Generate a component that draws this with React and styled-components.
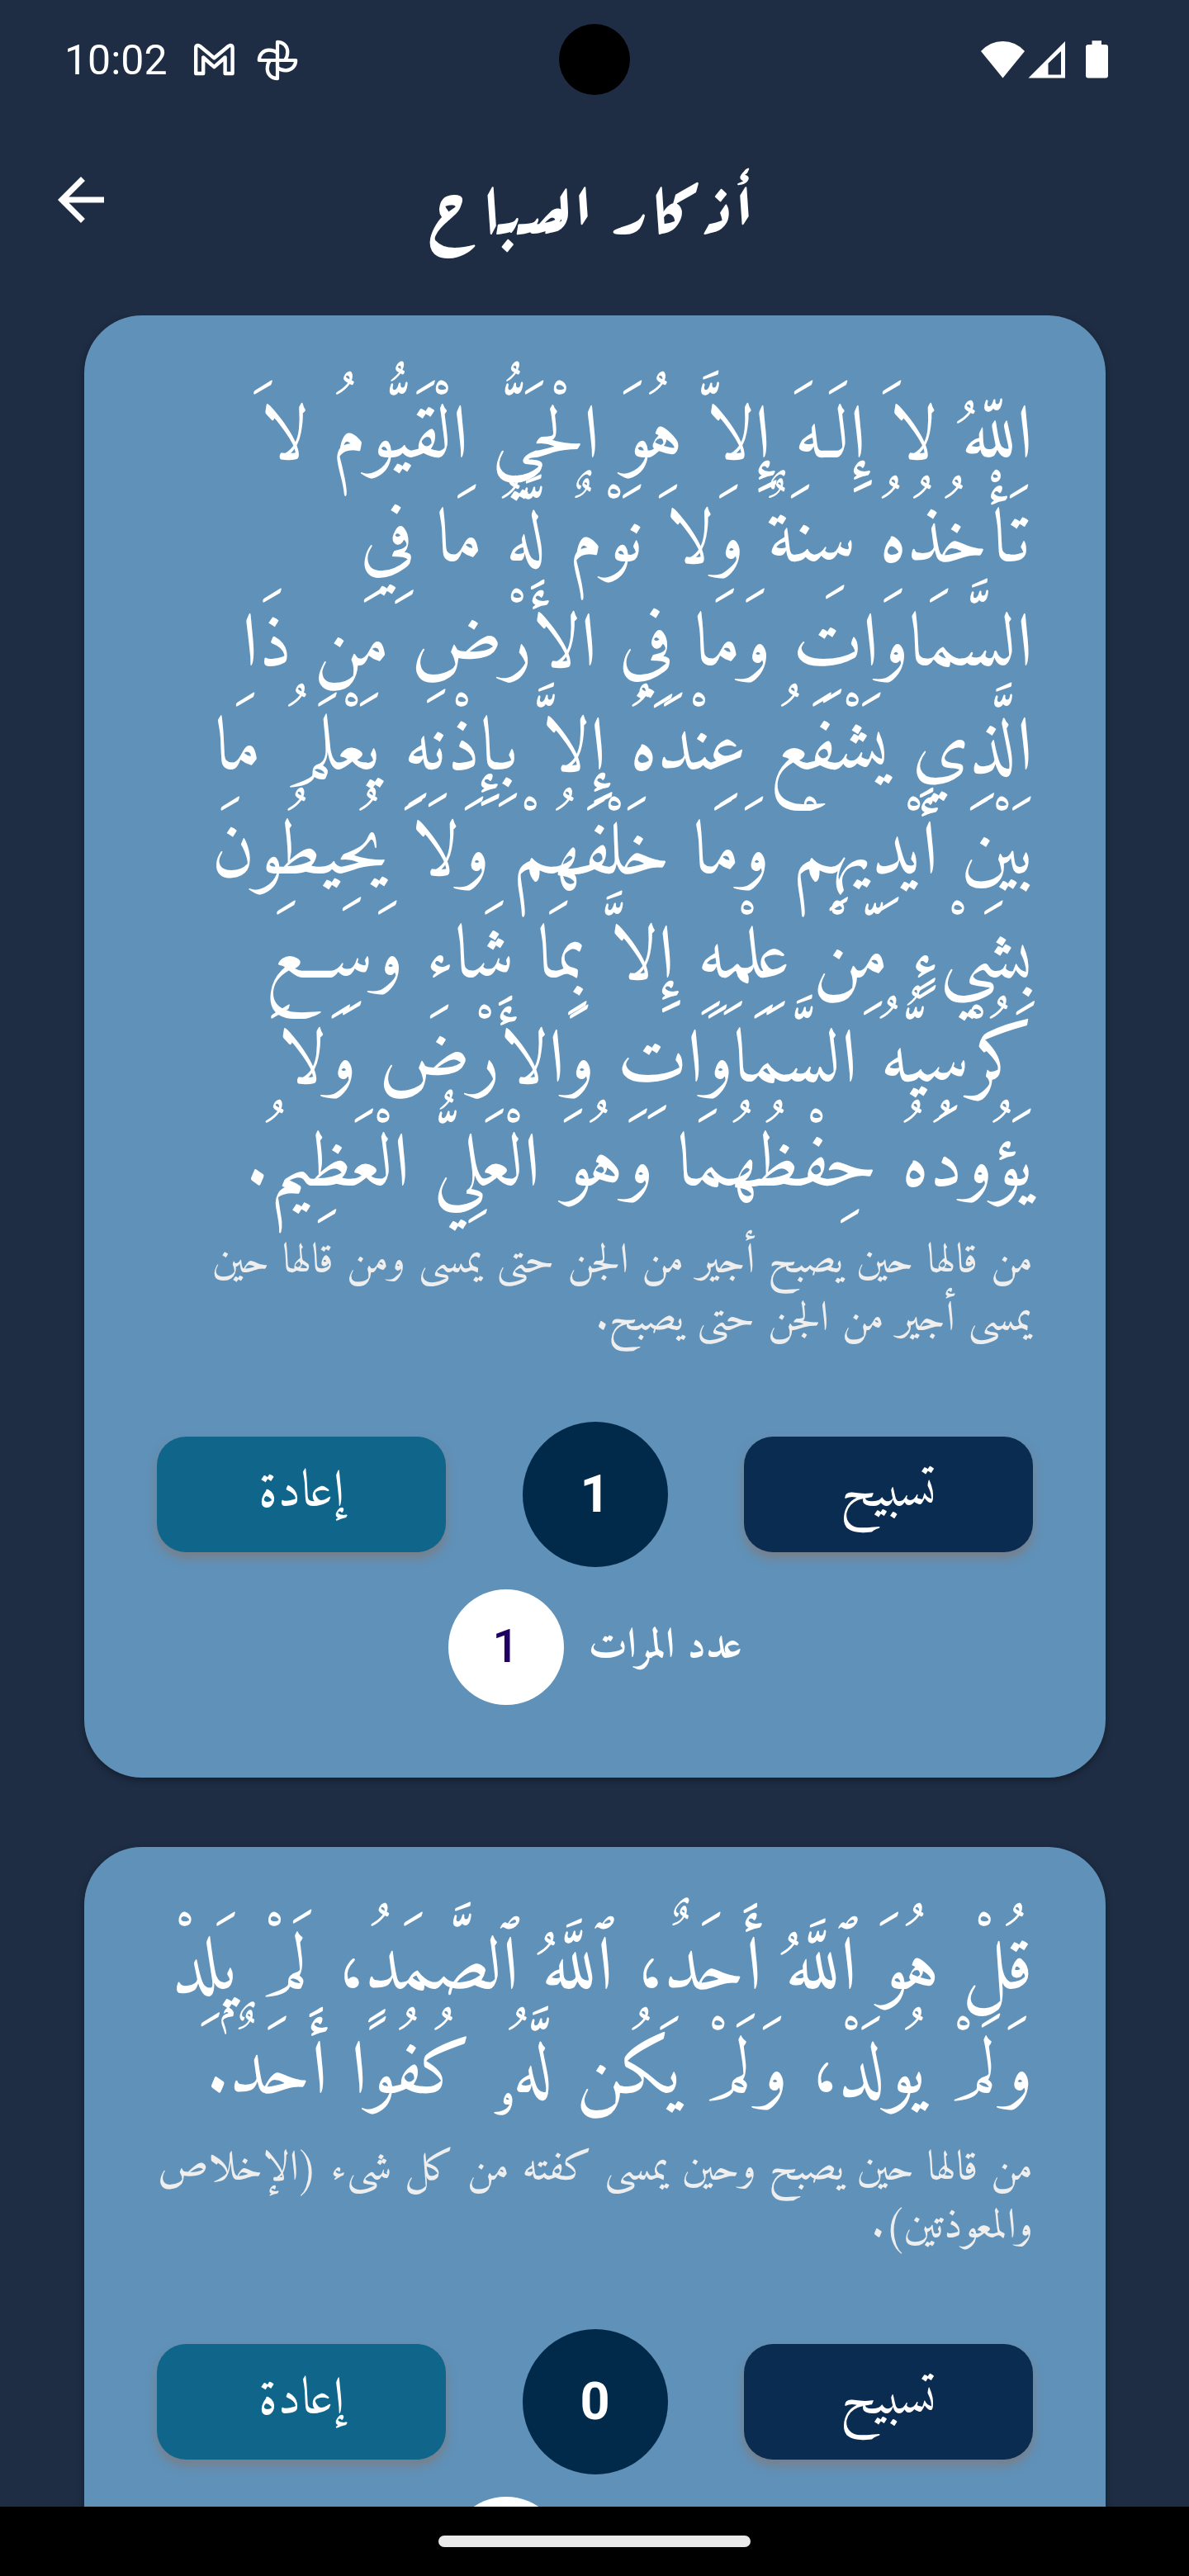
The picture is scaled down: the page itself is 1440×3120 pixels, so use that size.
import React from "react";
import styled, { createGlobalStyle } from "styled-components";

const GlobalStyle = createGlobalStyle`
  *, *::before, *::after { box-sizing: border-box; }
  html, body { margin: 0; padding: 0; background: #1e2d44; }
`;

const NASKH = `"Amiri", "Scheherazade New", "Noto Naskh Arabic", "DejaVu Sans", serif`;
const RUQAA = `"Aref Ruqaa", "Amiri", "DejaVu Sans", serif`;

const Screen = styled.div`
  width: 1440px;
  height: 3120px;
  display: flex;
  flex-direction: column;
  background: #1e2d44;
  color: #fff;
  overflow: hidden;
  font-family: Roboto, sans-serif;
`;

const StatusBar = styled.header`
  position: relative;
  flex: none;
  height: 146px;
  padding: 0 98px 0 78px;
  display: flex;
  align-items: center;
  justify-content: space-between;
`;

const StatusGroup = styled.div`
  display: flex;
  align-items: center;
  gap: 27px;
`;

const Clock = styled.span`
  width: 130px;
  font-size: 50px;
  line-height: 58px;
`;

const Camera = styled.div`
  position: absolute;
  left: 677px;
  top: 29px;
  width: 86px;
  height: 86px;
  border-radius: 50%;
  background: #000;
`;

const AppBar = styled.div`
  flex: none;
  height: 236px;
  display: grid;
  grid-template-columns: 196px 1fr 196px;
`;

const BackButton = styled.button`
  width: 84px;
  height: 84px;
  margin: 54px 0 0 56px;
  padding: 0;
  border: 0;
  background: none;
`;

const Title = styled.h1`
  margin: 0;
  padding-top: 37px;
  direction: rtl;
  text-align: center;
  white-space: nowrap;
  font-family: ${RUQAA};
  font-weight: 700;
  font-size: 84px;
  line-height: 120px;
`;

/* Spaces the letters of the heading, which letter-spacing leaves alone in joined scripts. */
const Letter = styled.span`
  margin-right: 7px;
`;

const Feed = styled.main`
  flex: 1;
  min-height: 0;
  overflow: hidden;
  padding: 0 101px 0 102px;
  display: flex;
  flex-direction: column;
  gap: 84px;
`;

const Card = styled.article`
  flex: none;
  padding: 87px 88px 88px;
  border-radius: 70px;
  background: #6091b8;
  box-shadow: 0 3px 8px rgba(0, 0, 0, 0.35);
`;

const Verse = styled.div`
  direction: rtl;
  font-family: ${NASKH};
  font-size: 91px;
  line-height: 126px;
  color: #fff;
`;

const Note = styled.div`
  margin-top: 17px;
  direction: rtl;
  font-family: ${NASKH};
  font-size: 50.75px;
  line-height: 70px;
  color: #eeeeee;
`;

const Line = styled.div`
  white-space: nowrap;
  word-spacing: ${(p) => p.$spread}px;
`;

const Controls = styled.div`
  margin-top: 88px;
  display: flex;
  align-items: center;
  justify-content: space-between;
`;

const ActionButton = styled.button`
  width: 350px;
  height: 140px;
  padding: 0 0 2px;
  border: 0;
  border-radius: 35px;
  background: ${(p) => p.$color};
  box-shadow: 0 7px 12px rgba(130, 120, 120, 0.75);
  color: #fff;
  font-family: ${NASKH};
  font-size: 63px;
  line-height: 138px;
`;

const Counter = styled.div`
  width: 176px;
  height: 176px;
  display: flex;
  align-items: center;
  justify-content: center;
  border-radius: 50%;
  background: #012a4a;
  font-weight: 700;
  font-size: 63px;
  line-height: 74px;
`;

const Repeats = styled.div`
  margin-top: 27px;
  display: flex;
  align-items: center;
  justify-content: center;
  gap: 30px;
`;

const RepeatCount = styled.div`
  width: 140px;
  height: 140px;
  padding-bottom: 3px;
  display: flex;
  align-items: center;
  justify-content: center;
  border-radius: 50%;
  background: #fff;
  color: #200060;
  font-weight: 500;
  font-size: 56px;
  line-height: 66px;
`;

const RepeatLabel = styled.div`
  min-width: 186px;
  direction: rtl;
  white-space: nowrap;
  font-family: ${NASKH};
  font-weight: 700;
  font-size: 50.75px;
  line-height: 70px;
`;

const NavBar = styled.footer`
  flex: none;
  height: 84px;
  display: flex;
  align-items: center;
  justify-content: center;
  background: #000;
`;

const HomePill = styled.div`
  width: 378px;
  height: 14px;
  border-radius: 7px;
  background: #eaeaea;
`;

const GmailIcon = () => (
  <svg width="49" height="50" viewBox="0 0 49 50" fill="none" stroke="#fff" strokeWidth="4.400" strokeLinejoin="round">
    <path d="M2.200 41V10C2.200 7 5 6 7 7.800L24.400 22.300L41.800 7.800C43.800 6 46.600 7 46.600 10V41H37.600V21.500L24.400 33.200L11.200 21.500V41Z" />
  </svg>
);

const PhotosIcon = () => (
  <svg width="50" height="50" viewBox="-25 -25 50 50" fill="none" stroke="#fff" strokeWidth="4.200" strokeLinejoin="round">
    {[0, 90, 180, 270].map((a) => (
      <path key={a} transform={`rotate(${a})`} d="M0 0V-22.200C7 -22.200 12.300 -17 12.300 -10.200C12.300 -6 11 -2.500 9 0Z" />
    ))}
  </svg>
);

const SignalIcons = () => (
  <svg width="156" height="50" viewBox="0 0 156 50" fill="#fff">
    <path d="M2 14Q13 2 28.500 2T55 14L28.500 46.500Z" />
    <path fillRule="evenodd" d="M104 2V46.500H59.500ZM99 14L83.500 28.700V42.500H99Z" />
    <path d="M136.500 1.200H148V6H153Q156 6 156 9V43.500Q156 46.500 153 46.500H132Q129 46.500 129 43.500V9Q129 6 132 6H136.500Z" />
  </svg>
);

const BackIcon = () => (
  <svg width="84" height="84" viewBox="0 0 24 24" fill="#fff">
    <path d="M20 11H7.830l5.590-5.590L12 4l-8 8 8 8 1.410-1.410L7.830 13H20v-2z" />
  </svg>
);

/* The kaf and alef stay together so that they keep their ligature. */
const HEADING = ["أ", "ذ", "كا", "ر", " ", "ا", "ل", "ص", "ب", "ا", "ح"];

/* Each line is [text, extra space between its words in px]. */
const CARDS = [
  {
    count: 1,
    repeats: 1,
    label: "عدد المرات",
    verse: [
      ["اللّهُ لاَ إِلَـهَ إِلاَّ هُوَ الْحَيُّ الْقَيُّومُ لاَ", 1.8],
      ["تَأْخُذُهُ سِنَةٌ وَلاَ نَوْمٌ لَّهُ مَا فِي", 0.9],
      ["السَّمَاوَاتِ وَمَا فِي الأَرْضِ مَن ذَا", 0],
      ["الَّذِي يَشْفَعُ عِنْدَهُ إِلاَّ بِإِذْنِهِ يَعْلَمُ مَا", 1.4],
      ["بَيْنَ أَيْدِيهِمْ وَمَا خَلْفَهُمْ وَلاَ يُحِيطُونَ", 1.4],
      ["بِشَيْءٍ مِّنْ عِلْمِهِ إِلاَّ بِمَا شَاء وَسِعَ", 0.9],
      ["كُرْسِيُّهُ السَّمَاوَاتِ وَالأَرْضَ وَلاَ", 0.8],
      ["يَؤُودُهُ حِفْظُهُمَا وَهُوَ الْعَلِيُّ الْعَظِيمُ.", 2],
    ],
    note: [
      ["من قالها حين يصبح أجير من الجن حتى يمسى ومن قالها حين", 1],
      ["يمسى أجير من الجن حتى يصبح.", 0.8],
    ],
  },
  {
    count: 0,
    verse: [
      ["قُلْ هُوَ ٱللَّهُ أَحَدٌ، ٱللَّهُ ٱلصَّمَدُ، لَمْ يَلِدْ", 1.1],
      ["وَلَمْ يُولَدْ، وَلَمْ يَكُن لَّهُۥ كُفُوًا أَحَدٌۢ.", 1.1],
    ],
    note: [
      ["من قالها حين يصبح وحين يمسى كفته من كل شىء (الإخلاص", 0.7],
      ["والمعوذتين).", 0],
    ],
  },
];

const Lines = ({ lines }) =>
  lines.map(([text, spread]) => (
    <Line key={text} $spread={spread}>{text}</Line>
  ));

const ZikrCard = ({ data }) => (
  <Card>
    <Verse><Lines lines={data.verse} /></Verse>
    <Note><Lines lines={data.note} /></Note>
    <Controls>
      <ActionButton $color="#10658b">إعادة</ActionButton>
      <Counter>{data.count}</Counter>
      <ActionButton $color="#092c50">تسبيح</ActionButton>
    </Controls>
    <Repeats>
      <RepeatCount>{data.repeats}</RepeatCount>
      <RepeatLabel>{data.label}</RepeatLabel>
    </Repeats>
  </Card>
);

export default function App() {
  return (
    <Screen>
      <GlobalStyle />
      <StatusBar>
        <StatusGroup>
          <Clock>10:02</Clock>
          <GmailIcon />
          <PhotosIcon />
        </StatusGroup>
        <Camera />
        <SignalIcons />
      </StatusBar>
      <AppBar>
        <BackButton aria-label="رجوع"><BackIcon /></BackButton>
        <Title>
          {HEADING.map((letter, i) => (
            <Letter key={i}>{letter}</Letter>
          ))}
        </Title>
      </AppBar>
      <Feed>
        {CARDS.map((data) => (
          <ZikrCard key={data.note[0][0]} data={data} />
        ))}
      </Feed>
      <NavBar><HomePill /></NavBar>
    </Screen>
  );
}
